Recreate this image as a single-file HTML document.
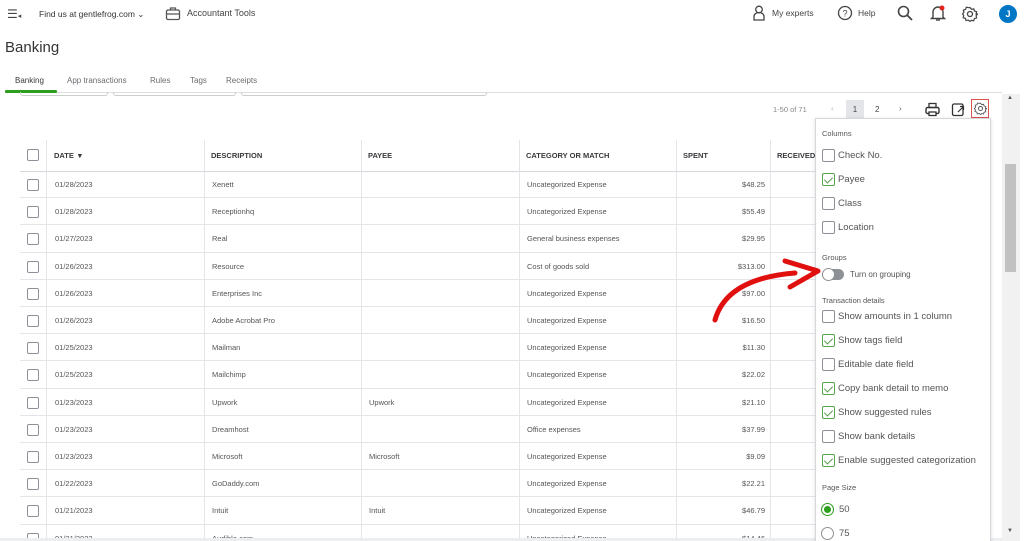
<!DOCTYPE html>
<html><head><meta charset="utf-8"><style>
*{box-sizing:border-box;margin:0;padding:0}
html,body{width:1024px;height:541px;overflow:hidden}
body{background:#fff;font-family:"Liberation Sans",sans-serif;color:#393a3d;position:relative}
.a{position:absolute;white-space:nowrap}
.s{font-size:8px;color:#444}
.row{position:absolute;left:20px;width:800px;height:27.2px;border-bottom:1px solid #e3e5e8}
.row div{position:absolute;top:9px;font-size:7.5px;color:#555;white-space:nowrap}
.cb{position:absolute;width:12px;height:12px;border:1px solid #8d9096;border-radius:2px;background:#fff}
.vl{position:absolute;top:140px;width:1px;height:401px;background:#e3e5e8}
.pi{position:absolute;left:822px;font-size:9.5px;color:#555;white-space:nowrap;width:165px;height:14px}
.pi .cb{left:0;top:-1px;width:13px;height:13px}
.pi span{position:absolute;left:16px;top:0;white-space:nowrap}
.ck{border-color:#5aa54f}
.ck::after{content:"";position:absolute;left:3px;top:1px;width:4px;height:7px;border:solid #5aa54f;border-width:0 1px 1px 0;transform:rotate(45deg)}
.lab{position:absolute;left:822px;font-size:7.5px;color:#555;white-space:nowrap}
</style></head><body>
<!-- top bar -->
<div class="a" style="left:7px;top:7px;font-size:12px;color:#444">☰<span style="font-size:7px">◂</span></div>
<div class="a s" style="left:39px;top:9px;font-size:8.5px;color:#333">Find us at gentlefrog.com ⌄</div>
<svg class="a" style="left:165px;top:6px" width="16" height="15" viewBox="0 0 16 15"><rect x="1.5" y="4" width="13" height="9.5" rx="1.5" fill="none" stroke="#555" stroke-width="1.3"/><path d="M5.5 4V2h5v2M1.5 8h13" fill="none" stroke="#555" stroke-width="1.3"/></svg>
<div class="a s" style="left:187px;top:8px;font-size:9px;color:#444">Accountant Tools</div>
<svg class="a" style="left:753px;top:5px" width="12" height="16" viewBox="0 0 12 16"><circle cx="6" cy="4.5" r="3.3" fill="none" stroke="#444" stroke-width="1.3"/><path d="M1 15v-3.5a5 4 0 0 1 10 0V15z" fill="none" stroke="#444" stroke-width="1.3"/></svg>
<div class="a s" style="left:772px;top:8px;font-size:8.5px">My experts</div>
<svg class="a" style="left:837px;top:5px" width="16" height="16"><circle cx="8" cy="8" r="6.5" fill="none" stroke="#444" stroke-width="1.3"/><text x="8" y="11.5" font-size="9" text-anchor="middle" fill="#444" font-family="Liberation Sans">?</text></svg>
<div class="a s" style="left:858px;top:8px;font-size:8.5px">Help</div>
<svg class="a" style="left:897px;top:5px" width="16" height="16"><circle cx="6.5" cy="6.5" r="5" fill="none" stroke="#444" stroke-width="1.6"/><path d="M10 10l5 5" stroke="#444" stroke-width="1.8"/></svg>
<svg class="a" style="left:930px;top:4px" width="16" height="18"><path d="M3 13V8a5 5 0 0 1 10 0v5l1.5 1.5h-13z" fill="none" stroke="#444" stroke-width="1.4"/><path d="M6 16h4" stroke="#444" stroke-width="1.4"/><circle cx="12" cy="4" r="2.5" fill="#e2231a"/></svg>
<svg class="a" style="left:962px;top:6px" width="16" height="16" viewBox="0 0 16 16"><circle cx="8" cy="8" r="2.5" fill="none" stroke="#444" stroke-width="1.3"/><path d="M8 1.5l1.5 1.8 2.3-.5.6 2.2 2.2.7-.5 2.3L15.5 8l-1.4 1.7.5 2.3-2.2.6-.7 2.2-2.3-.5L8 15.5l-1.7-1.4-2.3.5-.6-2.2-2.2-.7.5-2.3L.5 8l1.4-1.7-.5-2.3 2.2-.6.7-2.2 2.3.5z" fill="none" stroke="#444" stroke-width="1.2"/></svg>
<div class="a" style="left:999px;top:5px;width:18px;height:18px;border-radius:50%;background:#0077c5;color:#fff;font-size:9px;text-align:center;line-height:18px;font-weight:bold">J</div>
<div class="a" style="left:5px;top:39px;font-size:15px;color:#333">Banking</div>
<!-- tabs -->
<div class="a" style="left:15px;top:76px;font-size:8px;color:#393a3d">Banking</div>
<div class="a" style="left:67px;top:76px;font-size:8px;color:#6b6c72">App transactions</div>
<div class="a" style="left:150px;top:76px;font-size:8px;color:#6b6c72">Rules</div>
<div class="a" style="left:190px;top:76px;font-size:8px;color:#6b6c72">Tags</div>
<div class="a" style="left:226px;top:76px;font-size:8px;color:#6b6c72">Receipts</div>
<div class="a" style="left:5px;top:90px;width:52px;height:3px;background:#2ca01c;border-radius:1px"></div>
<div class="a" style="left:57px;top:92px;width:945px;height:1px;background:#dcdee0"></div>
<div class="a" style="left:20px;top:92px;width:88px;height:4px;border:1px solid #ccc;border-top:none;border-radius:0 0 3px 3px"></div>
<div class="a" style="left:113px;top:92px;width:123px;height:4px;border:1px solid #ccc;border-top:none;border-radius:0 0 3px 3px"></div>
<div class="a" style="left:241px;top:92px;width:246px;height:4px;border:1px solid #ccc;border-top:none;border-radius:0 0 3px 3px"></div>
<!-- pagination -->
<div class="a" style="left:773px;top:105px;font-size:7.5px;color:#888">1-50 of 71</div>
<div class="a" style="left:831px;top:104px;font-size:8px;color:#bbb">‹</div>
<div class="a" style="left:846px;top:100px;width:18px;height:19px;background:#e3e5e8;font-size:8px;text-align:center;line-height:19px;color:#444">1</div>
<div class="a" style="left:875px;top:105px;font-size:8px;color:#444">2</div>
<div class="a" style="left:899px;top:104px;font-size:8px;color:#666">›</div>
<svg class="a" style="left:925px;top:102px" width="15" height="15"><rect x="4" y="1.5" width="7" height="4" fill="none" stroke="#333" stroke-width="1.3"/><rect x="1" y="5.5" width="13" height="6" rx="1.5" fill="none" stroke="#333" stroke-width="1.4"/><rect x="4" y="10" width="7" height="3.5" fill="#fff" stroke="#333" stroke-width="1.3"/></svg>
<svg class="a" style="left:951px;top:102px" width="14" height="15"><rect x="1.5" y="2" width="10.5" height="11.5" rx="1.5" fill="none" stroke="#333" stroke-width="1.3"/><path d="M7 10l5-5M9 4.5h3.5V8" fill="none" stroke="#333" stroke-width="1.2"/></svg>
<div class="a" style="left:971px;top:99px;width:18px;height:19px;border:1px solid #d9534f"></div>
<svg class="a" style="left:974px;top:102px" width="13" height="13" viewBox="0 0 16 16"><circle cx="8" cy="8" r="2.5" fill="none" stroke="#555" stroke-width="1.2"/><path d="M8 1.5l1.5 1.8 2.3-.5.6 2.2 2.2.7-.5 2.3L15.5 8l-1.4 1.7.5 2.3-2.2.6-.7 2.2-2.3-.5L8 15.5l-1.7-1.4-2.3.5-.6-2.2-2.2-.7.5-2.3L.5 8l1.4-1.7-.5-2.3 2.2-.6.7-2.2 2.3.5z" fill="none" stroke="#555" stroke-width="1.1"/></svg>
<!-- table -->
<div class="a" style="left:20px;top:171px;width:800px;height:1px;background:#d4d7dc"></div>
<div class="vl" style="left:46px"></div><div class="vl" style="left:204px"></div><div class="vl" style="left:361px"></div><div class="vl" style="left:519px"></div><div class="vl" style="left:676px"></div><div class="vl" style="left:770px"></div>
<div class="cb" style="left:27px;top:149px"></div>
<div class="a" style="left:54px;top:151px;font-size:7.5px;font-weight:bold;color:#393a3d">DATE &nbsp;▾</div>
<div class="a" style="left:211px;top:151px;font-size:7.5px;font-weight:bold;color:#393a3d">DESCRIPTION</div>
<div class="a" style="left:368px;top:151px;font-size:7.5px;font-weight:bold;color:#393a3d">PAYEE</div>
<div class="a" style="left:526px;top:151px;font-size:7.5px;font-weight:bold;color:#393a3d">CATEGORY OR MATCH</div>
<div class="a" style="left:683px;top:151px;font-size:7.5px;font-weight:bold;color:#393a3d">SPENT</div>
<div class="a" style="left:777px;top:151px;font-size:7.5px;font-weight:bold;color:#393a3d">RECEIVED</div>

<div class="row" style="top:171px"><span class="cb" style="left:7px;top:8px"></span><div style="left:35px">01/28/2023</div><div style="left:192px">Xenett</div><div style="left:507px">Uncategorized Expense</div><div style="right:55px">$48.25</div></div>
<div class="row" style="top:198.2px"><span class="cb" style="left:7px;top:8px"></span><div style="left:35px">01/28/2023</div><div style="left:192px">Receptionhq</div><div style="left:507px">Uncategorized Expense</div><div style="right:55px">$55.49</div></div>
<div class="row" style="top:225.4px"><span class="cb" style="left:7px;top:8px"></span><div style="left:35px">01/27/2023</div><div style="left:192px">Real</div><div style="left:507px">General business expenses</div><div style="right:55px">$29.95</div></div>
<div class="row" style="top:252.6px"><span class="cb" style="left:7px;top:8px"></span><div style="left:35px">01/26/2023</div><div style="left:192px">Resource</div><div style="left:507px">Cost of goods sold</div><div style="right:55px">$313.00</div></div>
<div class="row" style="top:279.8px"><span class="cb" style="left:7px;top:8px"></span><div style="left:35px">01/26/2023</div><div style="left:192px">Enterprises Inc</div><div style="left:507px">Uncategorized Expense</div><div style="right:55px">$97.00</div></div>
<div class="row" style="top:307px"><span class="cb" style="left:7px;top:8px"></span><div style="left:35px">01/26/2023</div><div style="left:192px">Adobe Acrobat Pro</div><div style="left:507px">Uncategorized Expense</div><div style="right:55px">$16.50</div></div>
<div class="row" style="top:334.2px"><span class="cb" style="left:7px;top:8px"></span><div style="left:35px">01/25/2023</div><div style="left:192px">Mailman</div><div style="left:507px">Uncategorized Expense</div><div style="right:55px">$11.30</div></div>
<div class="row" style="top:361.4px"><span class="cb" style="left:7px;top:8px"></span><div style="left:35px">01/25/2023</div><div style="left:192px">Mailchimp</div><div style="left:507px">Uncategorized Expense</div><div style="right:55px">$22.02</div></div>
<div class="row" style="top:388.6px"><span class="cb" style="left:7px;top:8px"></span><div style="left:35px">01/23/2023</div><div style="left:192px">Upwork</div><div style="left:349px">Upwork</div><div style="left:507px">Uncategorized Expense</div><div style="right:55px">$21.10</div></div>
<div class="row" style="top:415.8px"><span class="cb" style="left:7px;top:8px"></span><div style="left:35px">01/23/2023</div><div style="left:192px">Dreamhost</div><div style="left:507px">Office expenses</div><div style="right:55px">$37.99</div></div>
<div class="row" style="top:443px"><span class="cb" style="left:7px;top:8px"></span><div style="left:35px">01/23/2023</div><div style="left:192px">Microsoft</div><div style="left:349px">Microsoft</div><div style="left:507px">Uncategorized Expense</div><div style="right:55px">$9.09</div></div>
<div class="row" style="top:470.2px"><span class="cb" style="left:7px;top:8px"></span><div style="left:35px">01/22/2023</div><div style="left:192px">GoDaddy.com</div><div style="left:507px">Uncategorized Expense</div><div style="right:55px">$22.21</div></div>
<div class="row" style="top:497.4px"><span class="cb" style="left:7px;top:8px"></span><div style="left:35px">01/21/2023</div><div style="left:192px">Intuit</div><div style="left:349px">Intuit</div><div style="left:507px">Uncategorized Expense</div><div style="right:55px">$46.79</div></div>
<div class="row" style="top:524.6px;height:16px;border-bottom:none;overflow:hidden"><span class="cb" style="left:7px;top:8px"></span><div style="left:35px">01/21/2023</div><div style="left:192px">Audible.com</div><div style="left:507px">Uncategorized Expense</div><div style="right:55px">$14.46</div></div>
<div class="a" style="left:0;top:538px;width:1003px;height:3px;background:#eceef0"></div>
<!-- scrollbar -->
<div class="a" style="left:1002px;top:94px;width:18px;height:447px;background:#f1f1f1"></div>
<div class="a" style="left:1005px;top:164px;width:11px;height:108px;background:#c1c1c1"></div>
<div class="a" style="left:1007px;top:95px;font-size:6px;color:#555">▲</div>
<div class="a" style="left:1007px;top:528px;font-size:6px;color:#555">▼</div>
<!-- popup -->
<div class="a" style="left:815px;top:118px;width:176px;height:430px;background:#fff;border:1px solid #d4d7dc;box-shadow:0 1px 4px rgba(0,0,0,.12)"></div>
<div class="lab" style="top:129px">Columns</div>
<div class="pi" style="top:150px"><span class="cb"></span><span>Check No.</span></div>
<div class="pi" style="top:174px"><span class="cb ck"></span><span>Payee</span></div>
<div class="pi" style="top:198px"><span class="cb"></span><span>Class</span></div>
<div class="pi" style="top:222px"><span class="cb"></span><span>Location</span></div>
<div class="lab" style="top:253px">Groups</div>
<div class="a" style="left:822px;top:269px;width:22px;height:11px;border-radius:6px;background:#8d9096"></div>
<div class="a" style="left:822px;top:268px;width:13px;height:13px;border-radius:50%;background:#fff;border:1px solid #8d9096"></div>
<div class="lab" style="left:850px;top:270px;font-size:8px">Turn on grouping</div>
<div class="lab" style="top:296px">Transaction details</div>
<div class="pi" style="top:311px"><span class="cb"></span><span>Show amounts in 1 column</span></div>
<div class="pi" style="top:335px"><span class="cb ck"></span><span>Show tags field</span></div>
<div class="pi" style="top:359px"><span class="cb"></span><span>Editable date field</span></div>
<div class="pi" style="top:383px"><span class="cb ck"></span><span>Copy bank detail to memo</span></div>
<div class="pi" style="top:407px"><span class="cb ck"></span><span>Show suggested rules</span></div>
<div class="pi" style="top:431px"><span class="cb"></span><span>Show bank details</span></div>
<div class="pi" style="top:455px"><span class="cb ck"></span><span>Enable suggested categorization</span></div>
<div class="lab" style="top:483px">Page Size</div>
<div class="a" style="left:821px;top:503px;width:13px;height:13px;border-radius:50%;border:1px solid #2ca01c"></div>
<div class="a" style="left:824px;top:506px;width:7px;height:7px;border-radius:50%;background:#2ca01c"></div>
<div class="lab" style="left:839px;top:504px;font-size:9.5px">50</div>
<div class="a" style="left:821px;top:527px;width:13px;height:13px;border-radius:50%;border:1px solid #8d9096"></div>
<div class="lab" style="left:839px;top:528px;font-size:9.5px">75</div>
<!-- red arrow -->
<svg class="a" style="left:700px;top:255px" width="125" height="75"><path d="M15 65C22 40 45 22 95 18" fill="none" stroke="#e0100f" stroke-width="5" stroke-linecap="round"/><path d="M85 6L118 16 90 32" fill="none" stroke="#e0100f" stroke-width="5" stroke-linecap="round" stroke-linejoin="round"/></svg>
</body></html>
